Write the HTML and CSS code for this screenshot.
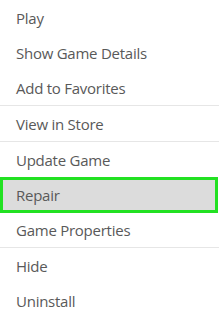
FILE: index.html
```html
<!DOCTYPE html>
<html>
<head>
<meta charset="utf-8">
<link rel="stylesheet" href="styles.css">
</head>
<body>
<ul class="menu">
  <li class="item">Play</li>
  <li class="item">Show Game Details</li>
  <li class="item">Add to Favorites</li>
  <li class="sep"></li>
  <li class="item">View in Store</li>
  <li class="sep"></li>
  <li class="item">Update Game</li>
  <li class="item selected">Repair</li>
  <li class="item">Game Properties</li>
  <li class="sep"></li>
  <li class="item">Hide</li>
  <li class="item">Uninstall</li>
</ul>
</body>
</html>
```
FILE: styles.css
```css
html, body {
  margin: 0;
  padding: 0;
  background: #ffffff;
}
.menu {
  list-style: none;
  margin: 0;
  padding: 0;
  width: 219px;
  height: 317px;
  background: #ffffff;
  font-family: "Open Sans", "Liberation Sans", sans-serif;
  font-size: 15px;
  letter-spacing: -0.25px;
  color: #595959;
  overflow: hidden;
}
.item {
  height: 35px;
  display: flex;
  align-items: center;
  padding-left: 16px;
  box-sizing: border-box;
}
.sep {
  height: 1px;
  background: #e6e6e6;
}
.selected {
  background: #dcdcdc;
  border: 3px solid #22e122;
  padding-left: 13px;
  width: 218px;
  height: 36px;
  margin-bottom: -1px;
}
```
